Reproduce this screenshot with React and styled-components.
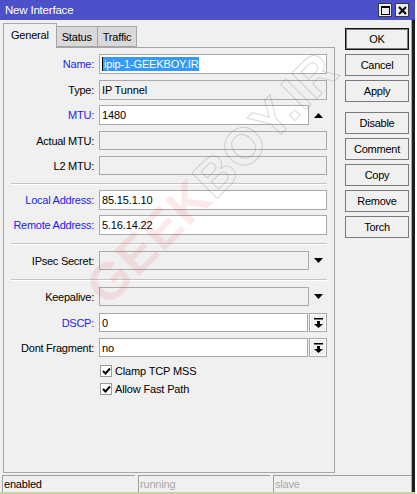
import React from "react";
import styled, { createGlobalStyle } from "styled-components";

const Global = createGlobalStyle`
  html, body { margin: 0; padding: 0; background: #ffffff; }
  body { font-family: "Liberation Sans", Arial, sans-serif; font-size: 11px; color: #000; }
  * { box-sizing: border-box; }
`;

const Window = styled.div`
  position: relative;
  width: 415px;
  height: 494px;
  overflow: hidden;
  display: flex;
  flex-direction: column;
`;

const TitleBar = styled.div`
  height: 20px;
  flex: none;
  background: #4d51c9;
  display: flex;
  align-items: center;
  padding: 0 6px 0 5px;
  color: #fff;
  font-size: 11.5px;
`;

const Title = styled.div`
  flex: 1;
  letter-spacing: -0.2px;
`;

const CaptionButton = styled.div`
  width: 14px;
  height: 14px;
  margin-left: 3px;
  border: 1px solid #3a3a3a;
  background: #ececec;
  display: flex;
  align-items: center;
  justify-content: center;
`;

const Body = styled.div`
  flex: 1;
  background: #f0f0f0;
  border-right: 3px solid #1e1e1e;
  box-shadow: inset -1px 0 0 #a8a8a8;
  display: flex;
  flex-direction: column;
`;

const Main = styled.div`
  display: flex;
  align-items: flex-start;
  padding-left: 3px;
`;

const TabArea = styled.div`
  width: 332px;
  margin-top: 3px;
  display: flex;
  flex-direction: column;
`;

const TabStrip = styled.div`
  display: flex;
  align-items: flex-end;
  height: 24px;
`;

const Tab = styled.div`
  position: relative;
  height: ${(p) => (p.$active ? "25px" : "21px")};
  padding: 0 ${(p) => (p.$active ? "7px" : "5px")};
  margin-bottom: ${(p) => (p.$active ? "-1px" : "0")};
  background: ${(p) => (p.$active ? "#f0f0f0" : "#d9d9d9")};
  border: 1px solid #a6a6a6;
  border-bottom: ${(p) => (p.$active ? "none" : "1px solid #a6a6a6")};
  border-left: ${(p) => (p.$active ? "1px solid #a6a6a6" : "none")};
  z-index: ${(p) => (p.$active ? 2 : 1)};
  display: flex;
  align-items: ${(p) => (p.$active ? "flex-start" : "center")};
  padding-top: ${(p) => (p.$active ? "5px" : "0")};
  font-size: 11px;
  letter-spacing: -0.2px;
`;

const Panel = styled.div`
  position: relative;
  height: 426px;
  border: 1px solid #a6a6a6;
  padding: 6px 0 0 1px;
  display: flex;
  flex-direction: column;
`;

const Row = styled.div`
  display: grid;
  grid-template-columns: 89px 228px;
  column-gap: 5px;
  align-items: center;
  height: ${(p) => p.$h || 20}px;
  margin-top: ${(p) => p.$mt || 0}px;
`;

const Label = styled.div`
  text-align: right;
  color: ${(p) => (p.$blue ? "#1c1cf0" : "#000")};
  font-size: 11px;
  letter-spacing: -0.25px;
  white-space: nowrap;
`;

const FieldLine = styled.div`
  display: flex;
  align-items: center;
  height: 100%;
`;

const Field = styled.div`
  width: ${(p) => p.$w || 228}px;
  height: 100%;
  flex: none;
  border: 1px solid #a9a9a9;
  background: ${(p) => (p.$disabled ? "#f0f0f0" : "#ffffff")};
  display: flex;
  align-items: center;
  padding-left: 2px;
  font-size: 11px;
  letter-spacing: -0.15px;
  white-space: nowrap;
`;

const Selected = styled.span`
  background: #3399ff;
  color: #fff;
  padding: 1px;
  border-left: 1px solid #000;
`;

const Side = styled.div`
  width: 18px;
  height: 100%;
  display: flex;
  align-items: center;
  justify-content: center;
`;

const SpinButton = styled.div`
  width: 19px;
  height: 100%;
  margin-left: 1px;
  border: 1px solid #a9a9a9;
  box-shadow: inset 0 0 0 1px #fff;
  background: #f0f0f0;
  display: flex;
  align-items: center;
  justify-content: center;
`;

const Separator = styled.div`
  width: 316px;
  margin: ${(p) => p.$top}px 0 ${(p) => p.$bottom}px 6px;
  height: 2px;
  border-top: 1px solid #c4c4c4;
  border-bottom: 1px solid #ffffff;
`;

const CheckRow = styled.label`
  display: flex;
  align-items: center;
  gap: 3px;
  margin: ${(p) => p.$mt}px 0 0 95px;
  height: 12px;
  font-size: 11px;
  letter-spacing: -0.15px;
`;

const Box = styled.span`
  width: 12px;
  height: 12px;
  border: 1px solid #9a9a9a;
  background: #fff;
  display: flex;
  align-items: center;
  justify-content: center;
`;

const ButtonColumn = styled.div`
  width: 64px;
  margin: 8px 0 0 10px;
  display: flex;
  flex-direction: column;
`;

const Button = styled.div`
  height: 22px;
  margin-top: ${(p) => p.$mt || 0}px;
  border: 1px solid ${(p) => (p.$default ? "#111" : "#7a7a7a")};
  box-shadow: ${(p) => (p.$default ? "inset 0 0 0 1px #7a7a7a" : "none")};
  background: #f0f0f0;
  display: flex;
  align-items: center;
  justify-content: center;
  font-size: 11px;
  letter-spacing: -0.25px;
`;

const StatusBar = styled.div`
  margin-top: 2px;
  padding-left: 2px;
  display: grid;
  grid-template-columns: 133px 132px 138px;
  column-gap: 3px;
  height: 19px;
`;

const StatusCell = styled.div`
  border-top: 1px solid #a0a0a0;
  border-left: 1px solid #a0a0a0;
  padding: 2px 0 0 1px;
  font-size: 11px;
  letter-spacing: -0.2px;
  color: ${(p) => (p.$dim ? "#a8a8a8" : "#000")};
`;

const Taskbar = styled.div`
  position: absolute;
  left: 0;
  right: 0;
  bottom: 0;
  height: 2px;
  background: #c9d3a7;
`;

/* diagonal site stamp laid over the form */
const Watermark = styled.div`
  position: absolute;
  left: 212px;
  top: 178px;
  transform: translate(-50%, -50%) rotate(-45deg);
  font-family: "Liberation Sans", Arial, sans-serif;
  font-weight: bold;
  font-size: 52px;
  line-height: 1;
  white-space: nowrap;
  pointer-events: none;
  letter-spacing: 1px;
`;

const MarkRed = styled.span`
  color: rgba(225, 60, 60, 0.11);
`;

const MarkGray = styled.span`
  color: transparent;
  -webkit-text-stroke: 1px rgba(120, 120, 120, 0.28);
`;

const TriangleUp = () => (
  <svg width="9" height="5" viewBox="0 0 9 5"><path d="M0 5 L4.5 0 L9 5 Z" fill="#000" /></svg>
);

const TriangleDown = () => (
  <svg width="9" height="5" viewBox="0 0 9 5"><path d="M0 0 L9 0 L4.5 5 Z" fill="#000" /></svg>
);

const BarDown = () => (
  <svg width="9" height="10" viewBox="0 0 9 10">
    <rect x="0" y="0" width="9" height="1.5" fill="#000" />
    <rect x="3" y="3" width="3" height="3" fill="#000" />
    <path d="M0 6 L9 6 L4.5 10 Z" fill="#000" />
  </svg>
);

const Check = () => (
  <svg width="9" height="8" viewBox="0 0 9 8">
    <path d="M1 4 L3.5 6.5 L8 1.5" stroke="#000" strokeWidth="2" fill="none" />
  </svg>
);

const MaxIcon = () => (
  <svg width="9" height="9" viewBox="0 0 9 9">
    <rect x="0.5" y="0.5" width="8" height="8" fill="none" stroke="#000" />
    <rect x="0" y="0" width="9" height="2" fill="#000" />
  </svg>
);

const CloseIcon = () => (
  <svg width="9" height="9" viewBox="0 0 9 9">
    <path d="M1 1 L8 8 M8 1 L1 8" stroke="#000" strokeWidth="2" />
  </svg>
);

const buttons = [
  { label: "OK", def: true },
  { label: "Cancel", mt: 4 },
  { label: "Apply", mt: 4 },
  { label: "Disable", mt: 10 },
  { label: "Comment", mt: 4 },
  { label: "Copy", mt: 4 },
  { label: "Remove", mt: 4 },
  { label: "Torch", mt: 4 },
];

export default function App() {
  return (
    <>
      <Global />
      <Window>
        <TitleBar>
          <Title>New Interface</Title>
          <CaptionButton><MaxIcon /></CaptionButton>
          <CaptionButton><CloseIcon /></CaptionButton>
        </TitleBar>
        <Body>
          <Main>
            <TabArea>
              <TabStrip>
                <Tab $active>General</Tab>
                <Tab>Status</Tab>
                <Tab>Traffic</Tab>
              </TabStrip>
              <Panel>
                <Row>
                  <Label $blue>Name:</Label>
                  <Field><Selected>ipip-1-GEEKBOY.IR</Selected></Field>
                </Row>
                <Row $mt={5.5}>
                  <Label>Type:</Label>
                  <Field $disabled>IP Tunnel</Field>
                </Row>
                <Row $mt={5.5}>
                  <Label $blue>MTU:</Label>
                  <FieldLine>
                    <Field $w={210}>1480</Field>
                    <Side><TriangleUp /></Side>
                  </FieldLine>
                </Row>
                <Row $mt={6} $h={19}>
                  <Label>Actual MTU:</Label>
                  <Field $disabled />
                </Row>
                <Row $mt={6} $h={19}>
                  <Label>L2 MTU:</Label>
                  <Field $disabled />
                </Row>
                <Separator $top={8} $bottom={5} />
                <Row>
                  <Label $blue>Local Address:</Label>
                  <Field>85.15.1.10</Field>
                </Row>
                <Row $mt={5}>
                  <Label $blue>Remote Address:</Label>
                  <Field>5.16.14.22</Field>
                </Row>
                <Separator $top={8} $bottom={6} />
                <Row $h={19}>
                  <Label>IPsec Secret:</Label>
                  <FieldLine>
                    <Field $w={210} $disabled />
                    <Side><TriangleDown /></Side>
                  </FieldLine>
                </Row>
                <Separator $top={9} $bottom={6} />
                <Row $h={19}>
                  <Label>Keepalive:</Label>
                  <FieldLine>
                    <Field $w={210} $disabled />
                    <Side><TriangleDown /></Side>
                  </FieldLine>
                </Row>
                <Row $mt={7} $h={19}>
                  <Label $blue>DSCP:</Label>
                  <FieldLine>
                    <Field $w={209}>0</Field>
                    <SpinButton><BarDown /></SpinButton>
                  </FieldLine>
                </Row>
                <Row $mt={6} $h={19}>
                  <Label>Dont Fragment:</Label>
                  <FieldLine>
                    <Field $w={209}>no</Field>
                    <SpinButton><BarDown /></SpinButton>
                  </FieldLine>
                </Row>
                <CheckRow $mt={8}>
                  <Box><Check /></Box>
                  Clamp TCP MSS
                </CheckRow>
                <CheckRow $mt={6}>
                  <Box><Check /></Box>
                  Allow Fast Path
                </CheckRow>
              </Panel>
            </TabArea>
            <ButtonColumn>
              {buttons.map((b) => (
                <Button key={b.label} $default={b.def} $mt={b.mt}>{b.label}</Button>
              ))}
            </ButtonColumn>
          </Main>
          <StatusBar>
            <StatusCell>enabled</StatusCell>
            <StatusCell $dim>running</StatusCell>
            <StatusCell $dim>slave</StatusCell>
          </StatusBar>
        </Body>
        <Watermark>
          <MarkRed>GEEK</MarkRed>
          <MarkGray>BOY.IR</MarkGray>
        </Watermark>
        <Taskbar />
      </Window>
    </>
  );
}
